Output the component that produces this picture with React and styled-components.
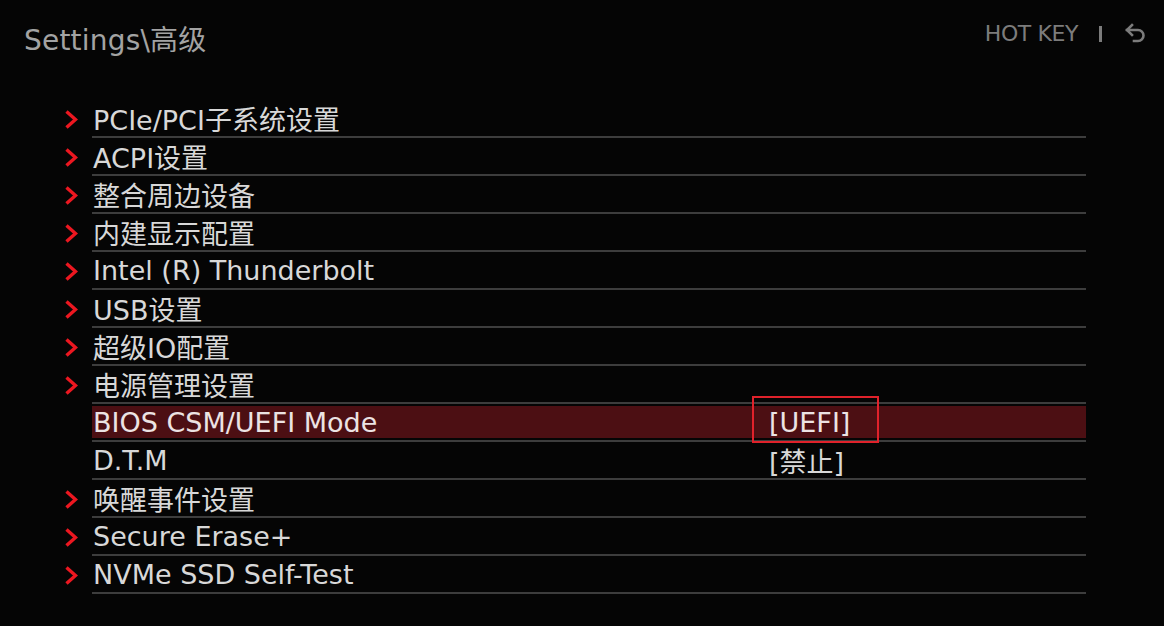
import React from 'react';
import styled, { createGlobalStyle } from 'styled-components';

const GlobalStyle = createGlobalStyle`
  html, body {
    margin: 0;
    padding: 0;
    background: #050505;
  }
  body {
    font-family: 'DejaVu Sans', 'Noto Sans CJK SC', sans-serif;
  }
`;

const Screen = styled.div`
  width: 1164px;
  height: 626px;
  background: #050505;
  overflow: hidden;
  box-sizing: border-box;
`;

const Header = styled.header`
  display: flex;
  justify-content: space-between;
  align-items: flex-start;
  height: 100px;
  padding: 18px 16px 0 24px;
  box-sizing: border-box;
`;

const Title = styled.h1`
  margin: 0;
  font-size: 28px;
  font-weight: normal;
  color: #a3a3a3;
  letter-spacing: 0.2px;
`;

const HotKey = styled.div`
  display: flex;
  align-items: center;
  gap: 19px;
  margin-top: 3px;
  color: #7c7c7c;
  font-size: 22px;
  letter-spacing: -0.4px;
`;

const Divider = styled.span`
  display: inline-block;
  width: 3px;
  height: 16px;
  background: #7c7c7c;
  margin: 0 3px 0 2px;
`;

const List = styled.ul`
  list-style: none;
  margin: 0;
  padding: 0 78px 0 60px;
`;

const Row = styled.li`
  display: flex;
  align-items: stretch;
`;

const Marker = styled.div`
  width: 32px;
  display: flex;
  align-items: center;
  padding-left: 5px;
  box-sizing: border-box;
`;

const Cell = styled.div`
  flex: 1;
  padding: 2px 0;
  border-bottom: 2px solid #3d3d3d;
`;

const Inner = styled.div`
  position: relative;
  display: flex;
  align-items: center;
  height: 32px;
  background: ${p => (p.$active ? '#4c0f13' : 'transparent')};
  color: ${p => (p.$active ? '#ece3e3' : '#d8d8d8')};
  font-size: 27px;
`;

const Label = styled.span`
  width: 676px;
  padding-left: 1px;
  white-space: nowrap;
`;

const Value = styled.span`
  white-space: nowrap;
`;

const FocusBox = styled.span`
  position: absolute;
  left: 660px;
  top: -10px;
  width: 127px;
  height: 47px;
  border: 2px solid #e0222b;
  box-sizing: border-box;
  pointer-events: none;
`;

const Chevron = () => (
  <svg width="13" height="19" viewBox="0 0 13 19">
    <polyline
      points="1.5,1.5 10.5,9.5 1.5,17.5"
      fill="none"
      stroke="#ec1720"
      strokeWidth="3.4"
    />
  </svg>
);

const BackIcon = () => (
  <svg width="24" height="24" viewBox="0 0 24 24" fill="none" stroke="#7c7c7c" strokeWidth="2.6" strokeLinecap="square">
    <path d="M8 3 3 8l5 5" />
    <path d="M3 8h11a5.5 5.5 0 0 1 0 11h-4" />
  </svg>
);

const items = [
  { label: 'PCIe/PCI子系统设置', sub: true },
  { label: 'ACPI设置', sub: true },
  { label: '整合周边设备', sub: true },
  { label: '内建显示配置', sub: true },
  { label: 'Intel (R) Thunderbolt', sub: true },
  { label: 'USB设置', sub: true },
  { label: '超级IO配置', sub: true },
  { label: '电源管理设置', sub: true },
  { label: 'BIOS CSM/UEFI Mode', value: '[UEFI]', active: true },
  { label: 'D.T.M', value: '[禁止]' },
  { label: '唤醒事件设置', sub: true },
  { label: 'Secure Erase+', sub: true },
  { label: 'NVMe SSD Self-Test', sub: true },
];

export default function App() {
  return (
    <Screen>
      <GlobalStyle />
      <Header>
        <Title>Settings\高级</Title>
        <HotKey>
          <span>HOT KEY</span>
          <Divider />
          <BackIcon />
        </HotKey>
      </Header>
      <List>
        {items.map(item => (
          <Row key={item.label}>
            <Marker>{item.sub && <Chevron />}</Marker>
            <Cell>
              <Inner $active={item.active}>
                <Label>{item.label}</Label>
                {item.value && <Value>{item.value}</Value>}
                {item.active && <FocusBox />}
              </Inner>
            </Cell>
          </Row>
        ))}
      </List>
    </Screen>
  );
}
